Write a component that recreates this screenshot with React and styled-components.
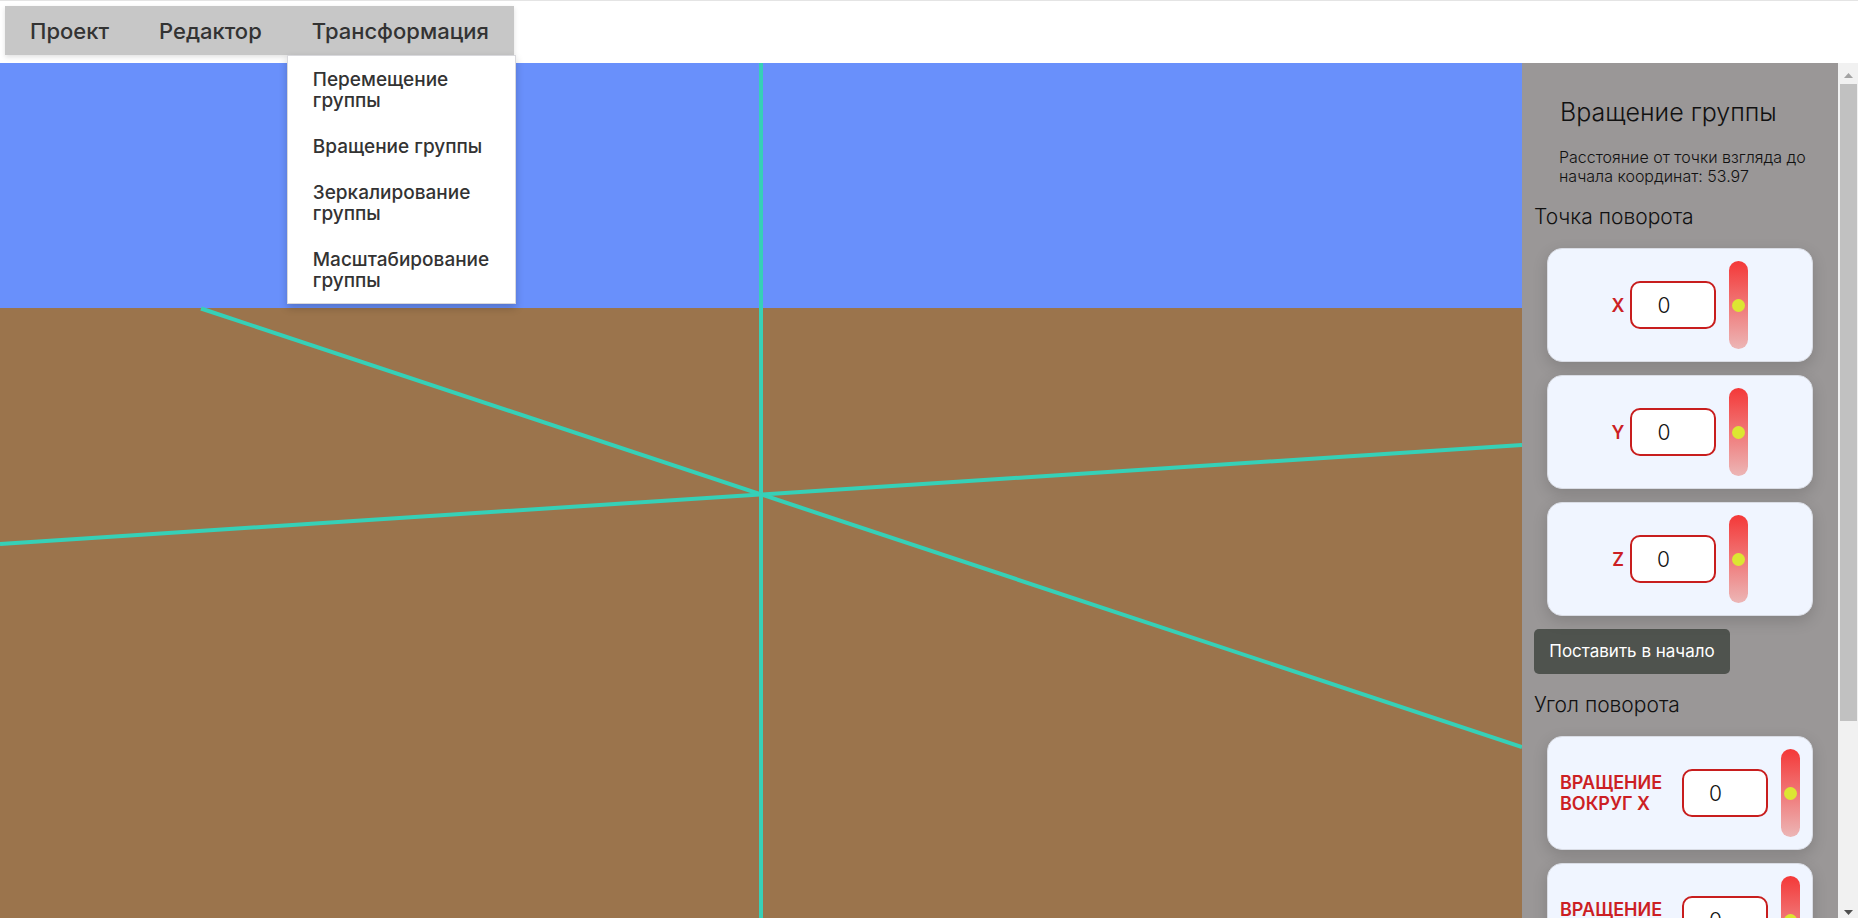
import React, { useState } from "react";
import styled, { createGlobalStyle } from "styled-components";

const GlobalStyle = createGlobalStyle`
  *, *::before, *::after { box-sizing: border-box; }
  body {
    margin: 0;
    font-family: "Inter", "Open Sans", sans-serif;
    color: #111;
    background: #fff;
  }
  button, input { font-family: inherit; }
  h2, h3, p, ul { margin: 0; padding: 0; }
`;

const Page = styled.div`
  display: flex;
  flex-direction: column;
  height: 100vh;
  overflow: hidden;
`;

const Header = styled.header`
  flex: none;
  display: flex;
  padding: 5px 5px 8px;
  border-top: 1px solid #e4e4e4;
`;

const MenuBar = styled.nav`
  display: flex;
  background: #c7c7c7;
  box-shadow: 0 2px 5px rgba(0, 0, 0, 0.12);
`;

const MenuItem = styled.div`
  position: relative;
`;

const MenuButton = styled.button`
  display: block;
  padding: 13px 25px 12px;
  border: 0;
  background: transparent;
  color: #333;
  font-size: 22px;
  font-weight: 500;
  line-height: 24px;
  cursor: pointer;
`;

const Dropdown = styled.ul`
  position: absolute;
  z-index: 2;
  top: 100%;
  left: 0;
  width: 229px;
  list-style: none;
  background: #fff;
  border: 1px solid #d8d8dc;
  box-shadow: 0 4px 8px rgba(0, 0, 0, 0.2);
`;

const DropdownLink = styled.a`
  display: block;
  padding: 13px 25px 12px;
  color: #333;
  font-size: 19px;
  font-weight: 500;
  line-height: 21px;
  text-decoration: none;
`;

const Main = styled.main`
  flex: 1;
  min-height: 0;
  display: flex;
`;

const Viewport = styled.svg`
  display: block;
  flex: 1;
  min-width: 0;
  height: 100%;
`;

const Sidebar = styled.aside`
  flex: none;
  width: 316px;
  padding: 35px 13px 0 12px;
  overflow: hidden;
  background: #9a9797;
`;

const PanelTitle = styled.h2`
  margin: 0 0 21px 26px;
  font-size: 25px;
  font-weight: 300;
  line-height: 29px;
`;

const PanelNote = styled.p`
  margin-left: 25px;
  font-size: 16px;
  font-weight: 300;
  line-height: 19px;
  white-space: nowrap;
`;

const SectionTitle = styled.h3`
  margin: 19px 0;
  font-size: 21px;
  font-weight: 300;
  line-height: 24px;
`;

const CardList = styled.div`
  display: flex;
  flex-direction: column;
  gap: 13px;
  padding: 0 12px 0 13px;
`;

const Card = styled.div`
  display: flex;
  align-items: center;
  justify-content: center;
  height: 114px;
  padding: 12px;
  border: 1px solid #d9dce4;
  border-radius: 15px;
  background: #f0f5ff;
  box-shadow: 0 5px 15px rgba(0, 0, 0, 0.15);
`;

const AxisLabel = styled.label`
  margin-right: 6px;
  color: #cc1f24;
  font-size: 18px;
  font-weight: 600;
  line-height: 21px;
  text-transform: uppercase;
`;

const NumberBox = styled.input`
  flex: none;
  width: 86px;
  height: 48px;
  padding: 0 25px;
  border: 2px solid #c81e1e;
  border-radius: 10px;
  background: #fff;
  color: #111;
  font-size: 21px;
  font-weight: 300;
  outline: none;
`;

const Slider = styled.input`
  appearance: none;
  flex: none;
  writing-mode: vertical-lr;
  direction: rtl;
  width: 19px;
  height: 88px;
  margin: 0 0 0 13px;
  padding: 0 3px;
  border-radius: 10px;
  background: linear-gradient(#f43838, #ecb6b6);

  &::-webkit-slider-thumb {
    appearance: none;
    width: 13px;
    height: 13px;
    border-radius: 50%;
    background: #dce632;
  }
`;

const ResetButton = styled.button`
  display: block;
  min-width: 196px;
  margin-top: 13px;
  padding: 12px 13px;
  border: 0;
  border-radius: 5px;
  background: #4f534e;
  color: #fff;
  font-size: 17px;
  font-weight: 400;
  line-height: 21px;
  white-space: nowrap;
  cursor: pointer;
`;

const ScrollBar = styled.div`
  flex: none;
  display: flex;
  flex-direction: column;
  width: 20px;
  padding: 0 1px 0 2px;
  background: #f1f1f1;
`;

const ScrollButton = styled.button`
  flex: none;
  display: flex;
  align-items: center;
  justify-content: center;
  height: ${(p) => (p.$down ? "17px" : "21px")};
  padding: ${(p) => (p.$down ? "6px 0 0" : "3px 0 0")};
  border: 0;
  background: transparent;
  color: ${(p) => (p.$down ? "#505050" : "#a3a3a3")};
`;

const ScrollTrack = styled.div`
  flex: 1;
`;

const ScrollThumb = styled.div`
  height: 78%;
  background: #c1c1c1;
`;

const transforms = [
  "Перемещение группы",
  "Вращение группы",
  "Зеркалирование группы",
  "Масштабирование группы",
];

function AxisControl({ id, label }) {
  const [value, setValue] = useState(0);
  const onChange = (e) => setValue(e.target.value);
  return (
    <Card>
      <AxisLabel htmlFor={id}>{label}</AxisLabel>
      <NumberBox id={id} type="text" inputMode="numeric" value={value} onChange={onChange} />
      <Slider type="range" min="-100" max="100" value={Number(value) || 0} aria-label={label} onChange={onChange} />
    </Card>
  );
}

function Scene() {
  return (
    <Viewport viewBox="0 0 1522 855" preserveAspectRatio="none" role="img" aria-label="Сцена">
      <rect width="1522" height="246" fill="#6990fb" />
      <rect y="245" width="1522" height="610" fill="#9b744c" />
      <g stroke="#36d0b7" strokeWidth="4" fill="none">
        <path d="M761 0V855" />
        <path d="M201 245.5L1522 684" />
        <path d="M0 481L1522 382" />
      </g>
    </Viewport>
  );
}

export default function App() {
  return (
    <Page>
      <GlobalStyle />
      <Header>
        <MenuBar>
          <MenuItem>
            <MenuButton type="button">Проект</MenuButton>
          </MenuItem>
          <MenuItem>
            <MenuButton type="button">Редактор</MenuButton>
          </MenuItem>
          <MenuItem>
            <MenuButton type="button" aria-expanded="true">Трансформация</MenuButton>
            <Dropdown>
              {transforms.map((name) => (
                <li key={name}>
                  <DropdownLink href="#">{name}</DropdownLink>
                </li>
              ))}
            </Dropdown>
          </MenuItem>
        </MenuBar>
      </Header>
      <Main>
        <Scene />
        <Sidebar>
          <PanelTitle>Вращение группы</PanelTitle>
          <PanelNote>
            Расстояние от точки взгляда до
            <br />
            начала координат: 53.97
          </PanelNote>
          <SectionTitle>Точка поворота</SectionTitle>
          <CardList>
            <AxisControl id="point-x" label="X" />
            <AxisControl id="point-y" label="Y" />
            <AxisControl id="point-z" label="Z" />
          </CardList>
          <ResetButton type="button">Поставить в начало</ResetButton>
          <SectionTitle>Угол поворота</SectionTitle>
          <CardList>
            <AxisControl id="angle-x" label="Вращение вокруг X" />
            <AxisControl id="angle-y" label="Вращение вокруг Y" />
          </CardList>
        </Sidebar>
        <ScrollBar>
          <ScrollButton type="button" aria-label="Вверх">
            <svg width="9" height="5" viewBox="0 0 9 5"><path d="M0 5L4.5 0L9 5Z" fill="currentColor" /></svg>
          </ScrollButton>
          <ScrollTrack>
            <ScrollThumb />
          </ScrollTrack>
          <ScrollButton type="button" $down aria-label="Вниз">
            <svg width="9" height="5" viewBox="0 0 9 5"><path d="M0 0L4.5 5L9 0Z" fill="currentColor" /></svg>
          </ScrollButton>
        </ScrollBar>
      </Main>
    </Page>
  );
}
